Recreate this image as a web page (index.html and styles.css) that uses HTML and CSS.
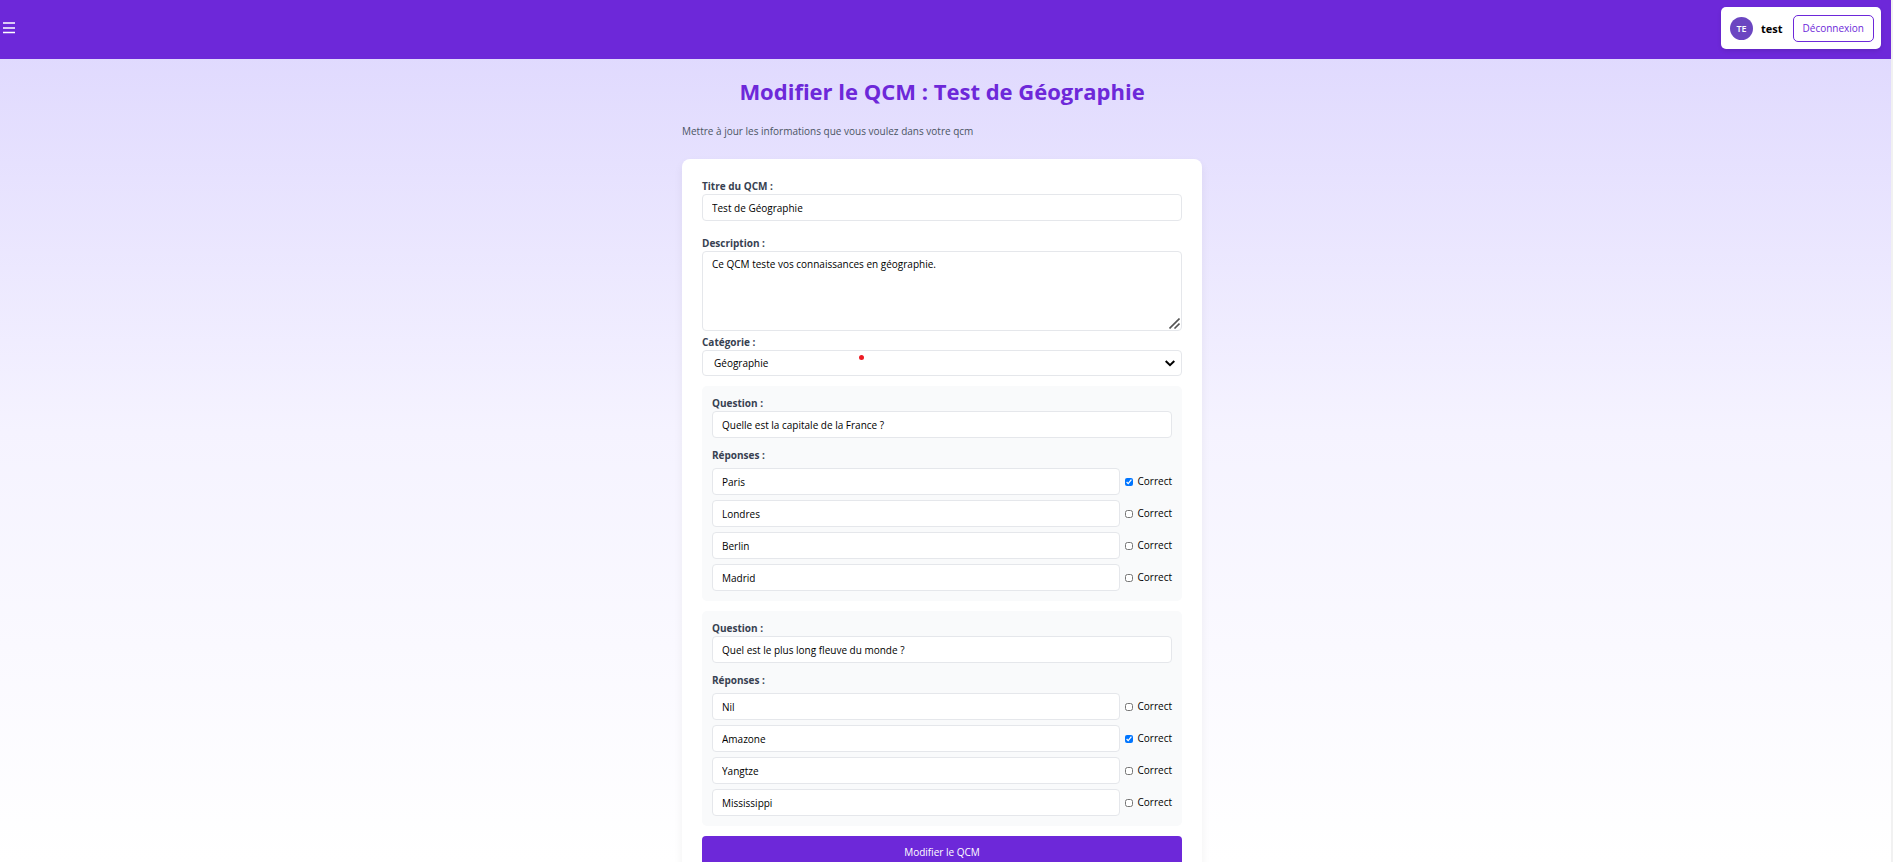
FILE: index.html
```html
<!DOCTYPE html>
<html lang="fr">
<head>
<meta charset="utf-8">
<title>Modifier le QCM</title>
<link rel="stylesheet" href="styles.css">
</head>
<body>
<header class="topbar">
  <button class="menu" type="button" aria-label="Menu">
    <svg width="12" height="12" viewBox="0 0 12 12"><path d="M0 1h12M0 6h12M0 10.500h12" stroke="currentColor" stroke-width="1.500"/></svg>
  </button>
  <div class="user">
    <span class="avatar">TE</span>
    <span class="name">test</span>
    <button class="logout" type="button">Déconnexion</button>
  </div>
</header>
<main class="page">
  <div class="content">
    <h1 class="title">Modifier le QCM : Test de Géographie</h1>
    <p class="subtitle">Mettre à jour les informations que vous voulez dans votre qcm</p>
    <form class="card">
      <div class="field field-title">
        <label class="label" for="titre">Titre du QCM :</label>
        <input class="input" id="titre" type="text" value="Test de Géographie">
      </div>
      <div class="field field-description">
        <label class="label" for="description">Description :</label>
        <div class="control">
          <textarea class="input textarea" id="description">Ce QCM teste vos connaissances en géographie.</textarea>
          <svg class="grip" width="11" height="11" viewBox="0 0 11 11"><path d="M.5 10.500L10.500 .5M5.500 10.500L10.500 5.500" stroke="#555" stroke-width="1.600"/></svg>
        </div>
      </div>
      <div class="field">
        <label class="label" for="categorie">Catégorie :</label>
        <div class="control">
          <select class="input select" id="categorie"><option>Géographie</option></select>
          <svg class="chevron" width="10" height="7" viewBox="0 0 10 7"><path d="M.7 1L5 5.200 9.300 1" fill="none" stroke="#000" stroke-width="2"/></svg>
          <span class="dot"></span>
        </div>
      </div>
      <section class="question">
        <div class="field">
          <label class="label" for="q1">Question :</label>
          <input class="input" id="q1" type="text" value="Quelle est la capitale de la France ?">
        </div>
        <div class="answers">
          <span class="label">Réponses :</span>
          <div class="answer"><input class="input" type="text" aria-label="Réponse 1" value="Paris"><label class="correct"><input class="check" type="checkbox" checked>Correct</label></div>
          <div class="answer"><input class="input" type="text" aria-label="Réponse 2" value="Londres"><label class="correct"><input class="check" type="checkbox">Correct</label></div>
          <div class="answer"><input class="input" type="text" aria-label="Réponse 3" value="Berlin"><label class="correct"><input class="check" type="checkbox">Correct</label></div>
          <div class="answer"><input class="input" type="text" aria-label="Réponse 4" value="Madrid"><label class="correct"><input class="check" type="checkbox">Correct</label></div>
        </div>
      </section>
      <section class="question">
        <div class="field">
          <label class="label" for="q2">Question :</label>
          <input class="input" id="q2" type="text" value="Quel est le plus long fleuve du monde ?">
        </div>
        <div class="answers">
          <span class="label">Réponses :</span>
          <div class="answer"><input class="input" type="text" aria-label="Réponse 1" value="Nil"><label class="correct"><input class="check" type="checkbox">Correct</label></div>
          <div class="answer"><input class="input" type="text" aria-label="Réponse 2" value="Amazone"><label class="correct"><input class="check" type="checkbox" checked>Correct</label></div>
          <div class="answer"><input class="input" type="text" aria-label="Réponse 3" value="Yangtze"><label class="correct"><input class="check" type="checkbox">Correct</label></div>
          <div class="answer"><input class="input" type="text" aria-label="Réponse 4" value="Mississippi"><label class="correct"><input class="check" type="checkbox">Correct</label></div>
        </div>
      </section>
      <button class="submit" type="submit">Modifier le QCM</button>
    </form>
  </div>
</main>
</body>
</html>
```
FILE: styles.css
```css
* {
  box-sizing: border-box;
}

body {
  display: flex;
  flex-direction: column;
  height: 100vh;
  margin: 0;
  border-right: 2px solid #f1f1f1;
  background: linear-gradient(to bottom, #ddd6fe, #f5f3ff, #fff);
  color: #000;
  font-family: "Open Sans", "Noto Sans", sans-serif;
  font-size: 10px;
  line-height: 15px;
}

button,
input,
select,
textarea {
  margin: 0;
  font: inherit;
}

.topbar {
  display: flex;
  flex: none;
  align-items: center;
  justify-content: space-between;
  padding: 7px 10px 10px 3px;
  background: #6d28d9;
}

.menu {
  display: flex;
  padding: 0;
  border: 0;
  background: none;
  color: #fff;
}

.user {
  display: flex;
  align-items: center;
  padding: 8px 7px 7px 9px;
  border-radius: 5px;
  background: #fff;
  box-shadow: 0 2px 4px rgba(0, 0, 0, 0.1);
}

.avatar {
  display: flex;
  align-items: center;
  justify-content: center;
  width: 23px;
  height: 23px;
  border-radius: 50%;
  background: #6b46c1;
  color: #fff;
  font-size: 9px;
  font-weight: 600;
}

.name {
  margin: 0 10px 0 8px;
  font-size: 11px;
  font-weight: 700;
}

.logout {
  padding: 5px 9px;
  border: 1px solid #6d28d9;
  border-radius: 5px;
  background: #fff;
  color: #6d28d9;
}

.page {
  flex: 1;
  min-height: 0;
  padding: 17px 7px 0 0;
  overflow-y: auto;
  scrollbar-width: none;
}

.content {
  max-width: 520px;
  margin: 0 auto;
}

.title {
  margin: 0;
  color: #6d28d9;
  font-size: 22px;
  font-weight: 700;
  line-height: 30px;
  text-align: center;
}

.subtitle {
  margin: 18px 0 20px;
  color: #4b5563;
}

.card {
  margin-bottom: 20px;
  padding: 20px;
  border-radius: 8px;
  background: #fff;
  box-shadow: 0 4px 10px rgba(0, 0, 0, 0.06);
}

.label {
  display: block;
  color: #374151;
  font-weight: 700;
}

.input {
  display: block;
  width: 100%;
  height: 27px;
  padding: 0 9px;
  border: 1px solid #e5e7eb;
  border-radius: 4px;
  background: #fff;
  color: #000;
}

.field-title {
  margin-bottom: 15px;
}

.field-description {
  margin-bottom: 4px;
}

.control {
  position: relative;
}

.textarea {
  height: 80px;
  padding-top: 5px;
  resize: none;
}

.grip {
  position: absolute;
  right: 2px;
  bottom: 2px;
}

.select {
  height: 26px;
  padding-left: 11px;
  appearance: none;
}

.chevron {
  position: absolute;
  top: 10px;
  right: 7px;
}

.dot {
  position: absolute;
  top: 5px;
  right: 66%;
  width: 5px;
  height: 5px;
  margin-right: 1px;
  border-radius: 50%;
  background: #ed1c24;
}

.question {
  margin-top: 10px;
  padding: 10px;
  border-radius: 5px;
  background: #f9fafb;
}

.answers {
  display: flex;
  flex-direction: column;
  gap: 5px;
  margin-top: 10px;
}

.answer {
  display: flex;
  gap: 5px;
}

.answer .input {
  flex: 1;
  min-width: 0;
}

.correct {
  display: flex;
  align-items: center;
  gap: 5px;
}

.check {
  width: 8px;
  height: 8px;
}

.submit {
  display: block;
  width: 100%;
  height: 32px;
  margin-top: 10px;
  border: 0;
  border-radius: 4px;
  background: #6d28d9;
  color: #fff;
}
```
